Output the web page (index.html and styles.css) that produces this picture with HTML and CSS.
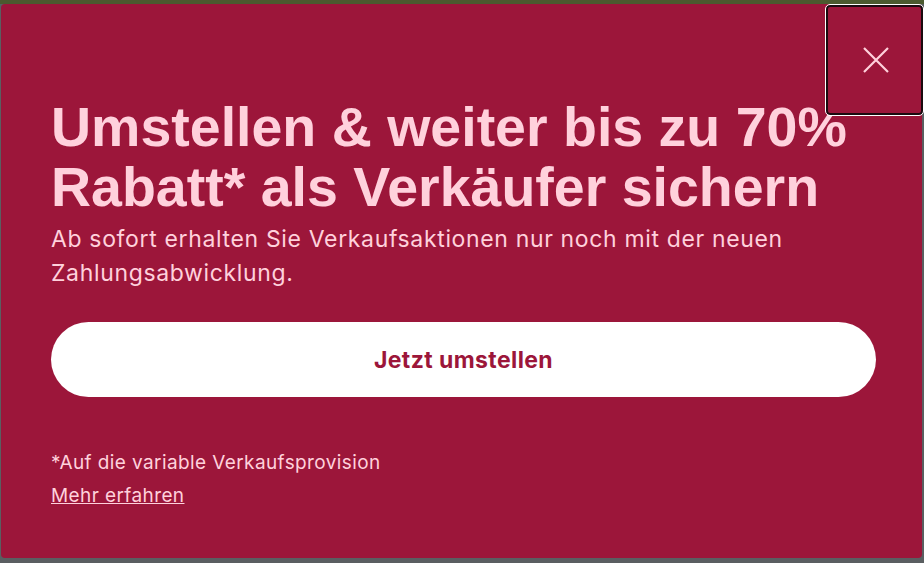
FILE: index.html
```html
<!DOCTYPE html>
<html lang="de">
<head>
<meta charset="utf-8">
<title>Umstellen</title>
<link rel="stylesheet" href="styles.css">
</head>
<body>
<div class="backdrop">
  <div class="dialog">
    <button class="close" aria-label="Schließen">
      <svg width="26" height="26" viewBox="0 0 26 26"><path d="M1 1 L25 25 M25 1 L1 25" stroke="#ffd1dc" stroke-width="2.2" fill="none"/></svg>
    </button>
    <div class="content">
      <h1 class="title">Umstellen &amp; weiter bis zu 70% Rabatt* als Verkäufer sichern</h1>
      <p class="lead">Ab sofort erhalten Sie Verkaufsaktionen nur noch mit der neuen Zahlungsabwicklung.</p>
      <button class="cta">Jetzt umstellen</button>
      <p class="note">*Auf die variable Verkaufsprovision</p>
      <a class="more" href="#">Mehr erfahren</a>
    </div>
  </div>
</div>
</body>
</html>
```

FILE: styles.css
```css
* { box-sizing: border-box; }
html, body { margin: 0; padding: 0; }
body {
  width: 924px;
  height: 563px;
  overflow: hidden;
  background: linear-gradient(#4b5a2f 0 4px, #5a5e61 4px);
  font-family: Inter, "Liberation Sans", Arial, sans-serif;
}
.backdrop {
  padding: 4px 2px 5px 1px;
  height: 563px;
}
.dialog {
  position: relative;
  height: 554px;
  background: #9c163a;
  border-radius: 4px;
  color: #ffd1dc;
}
.close {
  position: absolute;
  top: 1px;
  right: -1px;
  width: 97px;
  height: 110px;
  background: #9c163a;
  border: 2px solid #1a0a0f;
  outline: 1px solid #ffffff;
  border-radius: 4px;
  display: flex;
  align-items: center;
  justify-content: center;
  padding: 0 0 0 2px;
  cursor: pointer;
}
.content {
  padding: 93px 46px 0 50px;
  display: flex;
  flex-direction: column;
  align-items: flex-start;
}
.title {
  margin: 0;
  width: 820px;
  font-family: "Liberation Sans", Arial, sans-serif;
  font-size: 55.5px;
  line-height: 60px;
  font-weight: 700;
  letter-spacing: 0;
}
.lead {
  margin: 5px 0 0;
  width: 800px;
  font-size: 23px;
  line-height: 34px;
  letter-spacing: 0.65px;
}
.cta {
  margin-top: 32px;
  width: 825px;
  height: 75px;
  border: none;
  border-radius: 38px;
  background: #ffffff;
  color: #9c163a;
  font-family: Inter, "Liberation Sans", Arial, sans-serif;
  font-weight: 700;
  font-size: 23px;
  letter-spacing: 0.4px;
  cursor: pointer;
}
.note {
  margin: 53px 0 0;
  font-size: 19px;
  line-height: 26px;
  letter-spacing: 0.4px;
}
.more {
  margin-top: 7px;
  font-size: 19px;
  line-height: 26px;
  letter-spacing: 0.4px;
  color: #ffd1dc;
  text-decoration: underline;
}
```
